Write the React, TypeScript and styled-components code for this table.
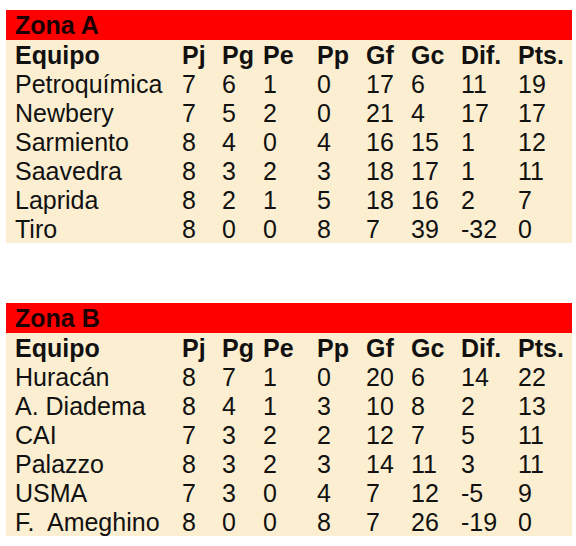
import styled, { createGlobalStyle } from 'styled-components'

const GlobalStyle = createGlobalStyle`
  body {
    margin: 0;
    background: #ffffff;
    font-family: 'Liberation Sans', Arial, sans-serif;
  }
`

const Page = styled.div`
  display: flex;
  flex-direction: column;
  gap: 60px;
  padding: 10px 4px 0 6px;
  width: 566px;
`

const Zone = styled.section`
  display: flex;
  flex-direction: column;
`

const ZoneTitle = styled.div`
  height: 30px;
  line-height: 31px;
  background: #ff0000;
  padding-left: 9px;
  font-size: 25px;
  font-weight: 700;
  color: #1a0000;
`

const Grid = styled.div`
  display: grid;
  grid-template-columns: 167px 40px 41px 54px 49px 45px 50px 57px 54px;
  grid-auto-rows: 29px;
  background: #fcefd1;
  padding-left: 9px;
`

const Cell = styled.div<{ $head?: boolean }>`
  font-size: 25px;
  line-height: 30px;
  white-space: pre;
  font-weight: ${p => (p.$head ? 700 : 400)};
  color: #111;
`

const columns = ['Equipo', 'Pj', 'Pg', 'Pe', 'Pp', 'Gf', 'Gc', 'Dif.', 'Pts.']

type Row = (string | number)[]

const zonaA: Row[] = [
  ['Petroquímica', 7, 6, 1, 0, 17, 6, 11, 19],
  ['Newbery', 7, 5, 2, 0, 21, 4, 17, 17],
  ['Sarmiento', 8, 4, 0, 4, 16, 15, 1, 12],
  ['Saavedra', 8, 3, 2, 3, 18, 17, 1, 11],
  ['Laprida', 8, 2, 1, 5, 18, 16, 2, 7],
  ['Tiro', 8, 0, 0, 8, 7, 39, -32, 0],
]

const zonaB: Row[] = [
  ['Huracán', 8, 7, 1, 0, 20, 6, 14, 22],
  ['A. Diadema', 8, 4, 1, 3, 10, 8, 2, 13],
  ['CAI', 7, 3, 2, 2, 12, 7, 5, 11],
  ['Palazzo', 8, 3, 2, 3, 14, 11, 3, 11],
  ['USMA', 7, 3, 0, 4, 7, 12, -5, 9],
  ['F.  Ameghino', 8, 0, 0, 8, 7, 26, -19, 0],
]

const Table = ({ title, rows }: { title: string; rows: Row[] }) => (
  <Zone>
    <ZoneTitle>{title}</ZoneTitle>
    <Grid>
      {columns.map(c => (
        <Cell key={c} $head>
          {c}
        </Cell>
      ))}
      {rows.map((r, i) =>
        r.map((v, j) => <Cell key={`${i}-${j}`}>{v}</Cell>)
      )}
    </Grid>
  </Zone>
)

export default function App() {
  return (
    <>
      <GlobalStyle />
      <Page>
        <Table title="Zona A" rows={zonaA} />
        <Table title="Zona B" rows={zonaB} />
      </Page>
    </>
  )
}
